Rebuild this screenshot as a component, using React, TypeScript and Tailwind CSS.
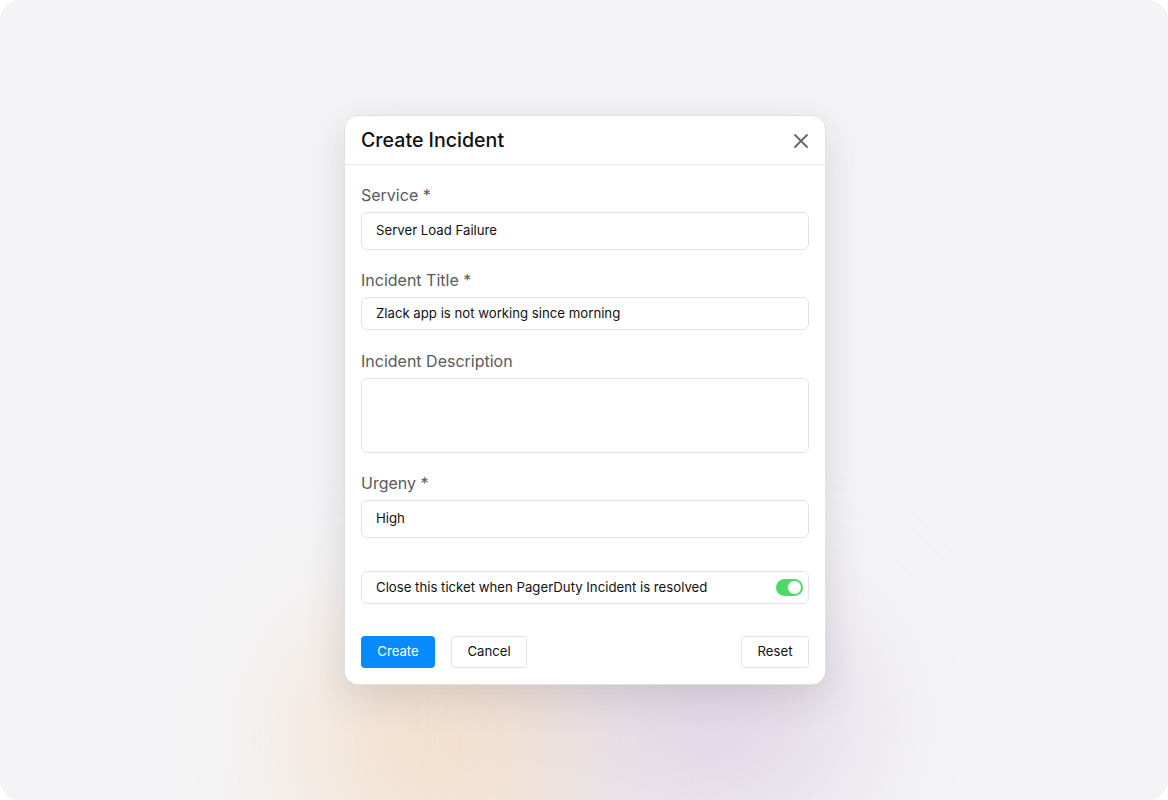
import React from "react";

function Field({ label, children, className = "" }: { label: string; children: React.ReactNode; className?: string }) {
  return (
    <div className={"flex flex-col " + className}>
      <label className="text-[16px] leading-[24px] text-[#5a5a5a]">{label}</label>
      <div className="mt-[5px]">{children}</div>
    </div>
  );
}

export default function App() {
  return (
    <div className="w-[1168px] h-[800px] bg-white" style={{ fontFamily: "Inter, 'Noto Sans', sans-serif" }}>
      <div className="relative w-full h-full rounded-[20px] bg-[#f4f4f6] overflow-hidden flex items-start pl-[344px] pt-[115px]">
        {/* decorative glows */}
        <div className="absolute left-[300px] top-[620px] w-[300px] h-[240px] rounded-full bg-[#f2d6b8] opacity-70 blur-[70px]" />
        <div className="absolute left-[560px] top-[610px] w-[300px] h-[220px] rounded-full bg-[#d8cadf] opacity-70 blur-[70px]" />

        <div className="relative w-[482px] h-[570px] bg-white rounded-[14px] border border-[#e2e2e4] shadow-[0_12px_40px_rgba(60,50,70,0.16)] flex flex-col">
          <div className="h-[49px] border-b border-[#e6e6e8] flex items-center justify-between pl-[16px] pr-[14px] pt-[2px]">
            <h2 className="text-[19.6px] font-medium text-[#111]">Create Incident</h2>
            <button className="w-[20px] h-[20px] flex items-center justify-center text-[#666]">
              <svg width="16" height="16" viewBox="0 0 16 16" fill="none" stroke="currentColor" strokeWidth="1.8" strokeLinecap="round">
                <path d="M2 2L14 14M14 2L2 14" />
              </svg>
            </button>
          </div>

          <div className="flex-1 flex flex-col px-[16px] pt-[18px] pb-[16px]">
            <Field label="Service *">
              <div className="h-[38px] rounded-[6px] border border-[#e4e4e6] flex items-center px-[14px] text-[13.2px] text-[#111]">
                Server Load Failure
              </div>
            </Field>
            <Field label="Incident Title *" className="mt-[18px]">
              <div className="h-[33px] rounded-[6px] border border-[#e4e4e6] flex items-center px-[14px] text-[13.2px] text-[#111]">
                Zlack app is not working since morning
              </div>
            </Field>
            <Field label="Incident Description" className="mt-[19px]">
              <div className="h-[75px] rounded-[6px] border border-[#e4e4e6]" />
            </Field>
            <Field label="Urgeny *" className="mt-[18px]">
              <div className="h-[38px] rounded-[6px] border border-[#e4e4e6] flex items-center px-[14px] text-[13.2px] text-[#111]">
                High
              </div>
            </Field>

            <div className="mt-[33px] h-[33px] rounded-[6px] border border-[#e4e4e6] flex items-center justify-between pl-[14px] pr-[5px] text-[13.2px] text-[#111]">
              <span>Close this ticket when PagerDuty Incident is resolved</span>
              <div className="w-[27px] h-[17px] rounded-full bg-[#4cd964] flex items-center justify-end p-[1px]">
                <div className="w-[15px] h-[15px] rounded-full bg-white border border-[#4cd964]" />
              </div>
            </div>

            <div className="mt-auto flex items-center">
              <button className="h-[32px] w-[74px] rounded-[4px] bg-[#0a8aff] text-white text-[13.2px]">Create</button>
              <button className="ml-[16px] h-[32px] w-[76px] rounded-[4px] border border-[#e4e4e6] bg-white text-[#111] text-[13.2px]">Cancel</button>
              <button className="ml-auto h-[32px] w-[68px] rounded-[4px] border border-[#e4e4e6] bg-white text-[#111] text-[13.2px]">Reset</button>
            </div>
          </div>
        </div>
      </div>
    </div>
  );
}
